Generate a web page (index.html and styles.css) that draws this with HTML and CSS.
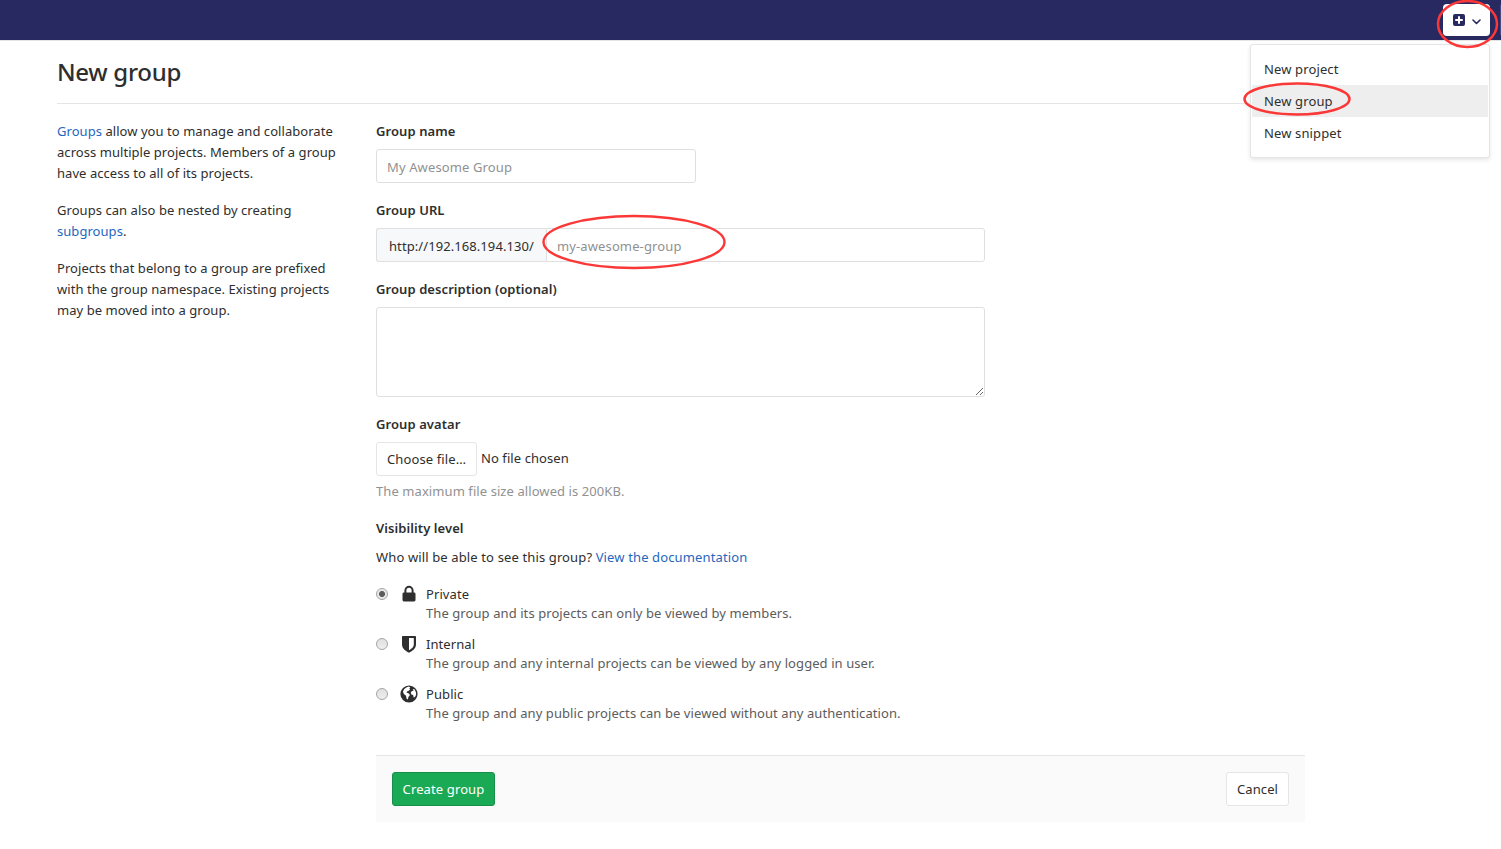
FILE: index.html
```html
<!DOCTYPE html>
<html lang="en">
<head>
<meta charset="utf-8">
<title>New group</title>
<link rel="stylesheet" href="styles.css">
</head>
<body>
<header class="navbar">
  <button class="new-toggle" type="button" aria-label="New">
    <svg width="12" height="12" viewBox="0 0 12 12"><rect width="12" height="12" rx="2" fill="#292961"/><path d="M6 3v6M3 6h6" stroke="#fff" stroke-width="2" stroke-linecap="round"/></svg>
    <svg class="chevron" width="9" height="6" viewBox="0 0 9 6"><path d="M1 1l3.5 3.5L8 1" fill="none" stroke="#292961" stroke-width="1.6" stroke-linecap="round" stroke-linejoin="round"/></svg>
  </button>
  <span class="nav-edge"></span>
  <nav class="menu">
    <a class="menu-item">New project</a>
    <a class="menu-item active">New group</a>
    <a class="menu-item">New snippet</a>
  </nav>
</header>
<main class="page">
  <h1 class="title">New group</h1>
  <div class="columns">
    <aside class="intro">
      <p><a class="link">Groups</a> allow you to manage and collaborate<br>across multiple projects. Members of a group<br>have access to all of its projects.</p>
      <p>Groups can also be nested by creating<br><a class="link">subgroups</a>.</p>
      <p>Projects that belong to a group are prefixed<br>with the group namespace. Existing projects<br>may be moved into a group.</p>
    </aside>
    <form class="form">
      <div class="field">
        <label class="label">Group name</label>
        <input class="input input-name" placeholder="My Awesome Group">
      </div>
      <div class="field">
        <label class="label">Group URL</label>
        <div class="input-group">
          <span class="addon">http://192.168.194.130/</span>
          <input class="input input-path" placeholder="my-awesome-group">
        </div>
      </div>
      <div class="field">
        <label class="label">Group description (optional)</label>
        <textarea class="input textarea"></textarea>
      </div>
      <div class="field avatar">
        <label class="label">Group avatar</label>
        <div class="file-row"><button class="btn btn-file" type="button">Choose file…</button><span class="file-name">No file chosen</span></div>
        <div class="hint">The maximum file size allowed is 200KB.</div>
      </div>
      <div class="visibility">
        <label class="label">Visibility level</label>
        <div class="question">Who will be able to see this group? <a class="link">View the documentation</a></div>
        <div class="option">
          <span class="radio checked"></span>
          <svg class="icon" width="18" height="18" viewBox="0 0 18 18"><path d="M5.400 8V5.400a3.600 3.600 0 0 1 7.200 0V8" fill="none" stroke="#2e2e2e" stroke-width="2"/><rect x="2.500" y="7.500" width="13" height="9" rx="1.400" fill="#2e2e2e"/></svg>
          <div><div class="option-title">Private</div><div class="option-text">The group and its projects can only be viewed by members.</div></div>
        </div>
        <div class="option">
          <span class="radio"></span>
          <svg class="icon" width="18" height="18" viewBox="0 0 18 18"><path fill="#2e2e2e" fill-rule="evenodd" d="M2 1.800Q2 1 2.800 1h12.400q.8 0 .8.800V9.500c0 3.800-3.400 6.500-7 8.200-3.600-1.700-7-4.400-7-8.200zM9 3v12.200c2.800-1.500 4.800-3.300 4.800-5.700V3z"/></svg>
          <div><div class="option-title">Internal</div><div class="option-text">The group and any internal projects can be viewed by any logged in user.</div></div>
        </div>
        <div class="option">
          <span class="radio"></span>
          <svg class="icon" width="18" height="18" viewBox="0 0 18 18"><circle cx="9" cy="9" r="8.600" fill="#2e2e2e"/><path fill="#fff" d="M6.700 2.200l2.100-.6 1.500.9-1 1.200.8.900-1.700 1.500-1.500.4-.2 1.200 1.800.6 1.500 1.800-1.600 1.800-.5 2.600-1.300-.8-.6-3-2.100-1.600-1-2.300A7.200 7.200 0 0 1 6.700 2.200zM12.800 4.100l1.700.2 1.500 3.100.1 2.400-1.100 2.300-1.300.5-.6-2.600-1.700-.5-.7-1.800 1.200-1.600 1.700-.3z"/></svg>
          <div><div class="option-title">Public</div><div class="option-text">The group and any public projects can be viewed without any authentication.</div></div>
        </div>
      </div>
      <div class="actions">
        <button class="btn btn-create" type="button">Create group</button>
        <button class="btn btn-cancel" type="button">Cancel</button>
      </div>
    </form>
  </div>
</main>
<svg class="marks" width="1501" height="849" viewBox="0 0 1501 849">
  <g fill="none" stroke="#fb3838" stroke-width="2.500">
    <ellipse cx="1467.500" cy="24" rx="29.500" ry="23"/>
    <ellipse cx="1297" cy="99" rx="52.500" ry="15.500"/>
    <ellipse cx="634" cy="242" rx="90.500" ry="26"/>
  </g>
</svg>
</body>
</html>
```

FILE: styles.css
```css
* { box-sizing: border-box; }
body { margin: 0; width: 1501px; height: 849px; overflow: hidden; position: relative; background: #fff; color: #2e2e2e; font: 13px/21px "Noto Sans", sans-serif; letter-spacing: 0.08px; }
button, input, textarea { font: inherit; letter-spacing: 0.12px; color: inherit; }
.navbar { position: relative; height: 41px; background: #292961; border-bottom: 1px solid #e5e5e5; display: flex; justify-content: flex-end; align-items: flex-start; }
.new-toggle { width: 47px; height: 32px; margin: 4px 10px 0 0; padding: 0 9px 0 10px; border: 0; border-radius: 4px; background: #fff; display: flex; align-items: center; justify-content: space-between; }
.new-toggle .chevron { margin-top: 3px; }
.nav-edge { width: 1px; height: 30px; margin-top: 5px; background: #4b4b83; }
.menu { position: absolute; z-index: 2; top: 44px; right: 11px; width: 240px; height: 114px; padding: 8px 1px; background: #fff; border: 1px solid #e5e5e5; border-radius: 3px; box-shadow: 0 2px 4px rgba(0,0,0,.1); letter-spacing: 0.13px; }
.menu-item { display: block; height: 32px; padding: 0 12px; line-height: 32px; }
.menu-item.active { background: #eee; }
.page { margin-left: 57px; width: 1248px; }
.title { margin: 0 0 17px; height: 63px; border-bottom: 1px solid #e5e5e5; font-size: 24px; font-weight: 500; line-height: 62px; letter-spacing: -0.3px; }
.columns { display: flex; }
.intro { width: 319px; white-space: nowrap; letter-spacing: 0.05px; }
.intro p { margin: 0 0 16px; }
.link { color: #1f67bd; }
.form { width: 929px; }
.field { margin-bottom: 17px; }
.label { display: block; margin-bottom: 7px; font-weight: 600; }
.input { display: block; height: 34px; padding: 7px 10px 6px; border: 1px solid #dfdfdf; border-radius: 3px; background: #fff; outline: 0; }
.input::placeholder { color: #919191; opacity: 1; }
.input-name { width: 320px; }
.input-group { display: flex; width: 609px; }
.addon { width: 170px; height: 34px; padding: 1px 0 0 12px; line-height: 32px; background: #f7f8fa; border: 1px solid #dfdfdf; border-right: 0; border-radius: 3px 0 0 3px; white-space: nowrap; }
.input-path { flex: 1; border-radius: 0 3px 3px 0; }
.textarea { width: 609px; height: 90px; resize: vertical; }
.btn { height: 34px; padding: 0; border: 1px solid #e5e5e5; border-radius: 3px; background: #fff; white-space: nowrap; text-align: center; }
.file-row { display: flex; gap: 4px; line-height: 33px; }
.btn-file { width: 101px; }
.hint { margin-top: 5px; color: #919191; }
.avatar { margin-bottom: 16px; }
.question { margin-top: 8px; margin-bottom: 16px; letter-spacing: 0.13px; }
.option { display: flex; height: 50px; line-height: 19px; white-space: nowrap; }
.radio { width: 12px; height: 12px; margin: 4px 12px 0 0; border: 1px solid #a5a5a5; border-radius: 50%; background: linear-gradient(#e0e0e0, #eee); }
.radio.checked { background: radial-gradient(circle, #5c5c5c 2.6px, #e9e9e9 3.400px); }
.icon { margin: 1px 8px 0 0; }
.option-text { color: #5c5c5c; }
.option-title { padding-top: 1px; height: 20px; }
.actions { display: flex; justify-content: space-between; height: 67px; margin-top: 21px; padding: 16px; background: #fafafa; border-top: 1px solid #e5e5e5; }
.btn-create { width: 103px; background: #1aaa55; border-color: #168f48; color: #fff; }
.btn-cancel { width: 63px; }
.marks { position: absolute; z-index: 3; left: 0; top: 0; pointer-events: none; }
```
